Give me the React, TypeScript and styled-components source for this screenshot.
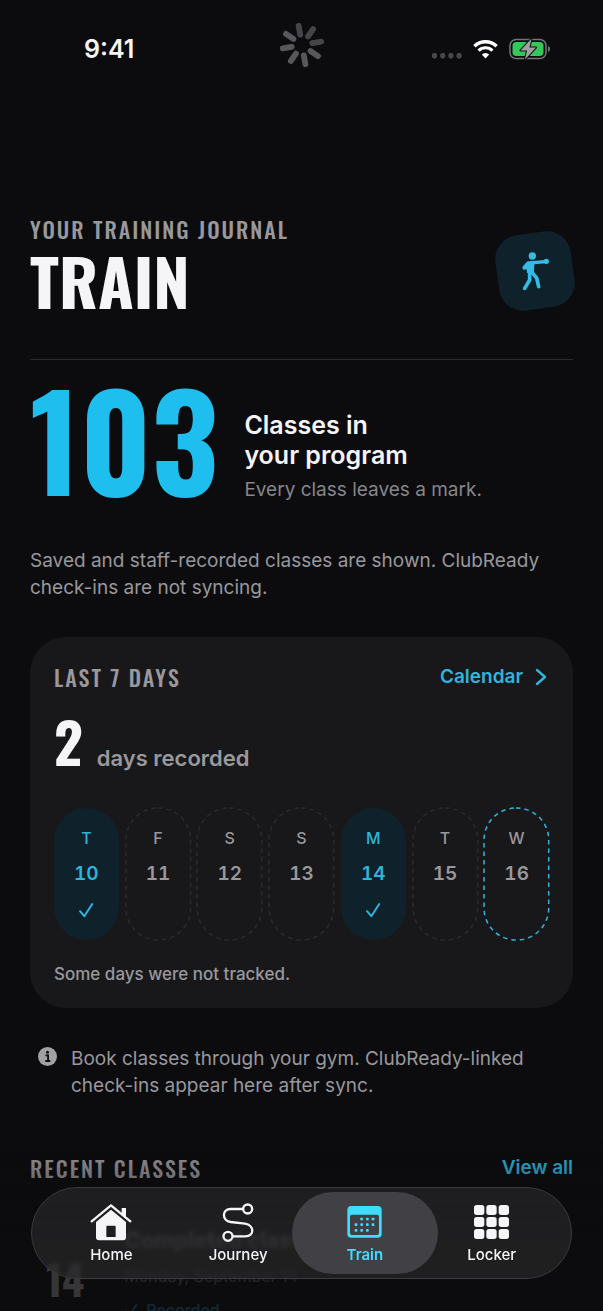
import React from "react";
import styled, { createGlobalStyle } from "styled-components";

const color = {
  bg: "#0c0c0e",
  card: "#18181a",
  text: "#f5f5f8",
  muted: "#98989d",
  dim: "#86868b",
  accent: "#1ebfef",
  link: "#2fb4dc",
  tint: "#0f212a",
};

const sans = `Inter, "Noto Sans", sans-serif`;
const display = `Oswald, "Liberation Sans Narrow", "Liberation Sans", sans-serif`;

const GlobalStyle = createGlobalStyle`
  *, *::before, *::after { box-sizing: border-box; }
  body { margin: 0; background: ${color.bg}; color: ${color.text}; font-family: ${sans}; }
  h1, h2, h3, p, ul, ol { margin: 0; padding: 0; }
  ul, ol { list-style: none; }
  button { font: inherit; border: 0; padding: 0; background: none; cursor: pointer; }
  a { text-decoration: none; }
  svg { display: block; }
`;

const Screen = styled.div`
  height: 100vh;
  overflow: hidden auto;
  scrollbar-width: none;
  background: ${color.bg};
`;

const StatusBar = styled.div`
  display: grid;
  grid-template-columns: 1fr auto 1fr;
  align-items: center;
  height: 98px;
  padding: 0 52px 0 84px;
`;

const Clock = styled.time`
  font-size: 25px;
  font-weight: 600;
  line-height: 30px;
`;

const SpinnerSlot = styled.div`
  margin: 0 32px 8px 0;
`;

const StatusIcons = styled.div`
  display: flex;
  justify-content: flex-end;
  align-items: center;
  gap: 11px;
`;

const Page = styled.main`
  padding: 117px 30px 140px;
`;

const Header = styled.header`
  display: flex;
  justify-content: space-between;
  align-items: center;
  padding-bottom: 32px;
  border-bottom: 1px solid #2a2a2d;
`;

const Label = styled.h2`
  font-family: ${display};
  font-size: 22px;
  font-weight: 500;
  line-height: 28px;
  letter-spacing: 2px;
  text-transform: uppercase;
  color: ${color.muted};
`;

const Title = styled.h1`
  margin-bottom: 10px;
  font-family: ${display};
  font-size: 65px;
  font-weight: 700;
  line-height: 74px;
  text-transform: uppercase;
`;

const Badge = styled.div`
  display: grid;
  place-items: center;
  width: 76px;
  height: 76px;
  border-radius: 24px;
  background: ${color.tint};
  transform: rotate(-8deg);

  svg {
    transform: rotate(8deg);
  }
`;

const Hero = styled.section`
  display: flex;
  align-items: flex-start;
  gap: 26px;
  padding-top: 28px;
`;

const HeroCount = styled.strong`
  font-family: ${display};
  font-size: 130px;
  font-weight: 700;
  line-height: 100px;
  color: ${color.accent};
`;

const HeroText = styled.div`
  padding-top: 22px;
`;

const HeroTitle = styled.p`
  font-size: 25px;
  font-weight: 600;
  line-height: 30px;
`;

const Body = styled.p`
  font-size: 19px;
  line-height: 27px;
  color: ${color.muted};
`;

const HeroNote = styled(Body)`
  margin-top: 6px;
  color: ${color.dim};
`;

const Notice = styled(Body)`
  margin-top: 44px;
`;

const Card = styled.section`
  margin-top: 36px;
  padding: 24px;
  border-radius: 36px;
  background: ${color.card};
`;

const SectionHead = styled.div`
  display: flex;
  justify-content: space-between;
  align-items: center;
`;

const TextLink = styled.a`
  display: flex;
  align-items: center;
  gap: 12px;
  font-size: 19px;
  font-weight: 600;
  line-height: 32px;
  color: ${color.link};
`;

const Summary = styled.p`
  display: flex;
  align-items: baseline;
  gap: 14px;
  margin-top: 18px;
  font-size: 22px;
  font-weight: 600;
  line-height: 28px;
  color: ${color.muted};
`;

const SummaryCount = styled.strong`
  font-family: ${display};
  font-size: 56px;
  line-height: 60px;
  color: ${color.text};
`;

const Week = styled.ol`
  display: grid;
  grid-template-columns: repeat(7, 1fr);
  gap: 7px;
  margin-top: 36px;
`;

const Day = styled.li<{ $done: boolean }>`
  position: relative;
  display: flex;
  flex-direction: column;
  align-items: center;
  height: 132px;
  padding: 12px 0;
  border-radius: 33px;
  line-height: 36px;
  background: ${(p) => (p.$done ? color.tint : "transparent")};
  color: ${(p) => (p.$done ? color.link : color.muted)};
`;

const DayOutline = styled.svg`
  position: absolute;
  inset: 0;
  width: 100%;
  height: 100%;
  overflow: visible;
`;

const DayName = styled.span`
  font-size: 16px;
  font-weight: 500;
`;

const DayNumber = styled.span`
  font-size: 19px;
  font-weight: 600;
  font-variant-numeric: tabular-nums;
`;

const DayMark = styled.span`
  display: grid;
  place-items: center;
  height: 36px;
`;

const Caption = styled.p`
  margin-top: 24px;
  font-size: 17px;
  font-weight: 500;
  line-height: 20px;
  color: ${color.muted};
`;

const Info = styled.div`
  display: flex;
  gap: 14px;
  margin-top: 37px;
  padding-left: 8px;

  svg {
    flex: none;
    margin-top: 2px;
  }
`;

const RecentHead = styled(SectionHead)`
  margin-top: 53px;
`;

const ClassRow = styled.article`
  display: flex;
  gap: 40px;
  margin-top: 34px;
  padding-left: 16px;
`;

const ClassDay = styled.strong`
  padding-top: 32px;
  font-family: ${display};
  font-size: 42px;
  line-height: 56px;
`;

const ClassTitle = styled.h3`
  font-size: 22px;
  font-weight: 700;
  line-height: 44px;
`;

const ClassMeta = styled.p`
  font-size: 16px;
  line-height: 28px;
  color: ${color.muted};
`;

const ClassState = styled.p`
  display: flex;
  align-items: center;
  gap: 8px;
  font-size: 16px;
  font-weight: 500;
  line-height: 40px;
  color: ${color.link};
`;

const BottomFade = styled.div`
  position: fixed;
  inset: auto 0 0;
  height: 170px;
  background: linear-gradient(rgba(12, 12, 14, 0), rgba(12, 12, 14, 0.82) 60%, rgba(12, 12, 14, 0.82));
  pointer-events: none;
`;

const TabBar = styled.nav`
  position: fixed;
  inset: auto 31px 32px;
  display: grid;
  grid-template-columns: repeat(4, 1fr);
  height: 92px;
  padding: 4px 16px;
  border: 1px solid #3a3a3d;
  border-radius: 46px;
  background: rgba(42, 42, 44, 0.64);
  backdrop-filter: blur(2px);
`;

const Tab = styled.button<{ $active: boolean }>`
  position: relative;
  display: flex;
  flex-direction: column;
  align-items: center;
  justify-content: center;
  gap: 3px;
  font-size: 15px;
  font-weight: ${(p) => (p.$active ? 600 : 500)};
  line-height: 20px;
  color: ${(p) => (p.$active ? "#3fdcff" : color.text)};

  &::before {
    content: "";
    position: absolute;
    inset: 0 -10px;
    z-index: -1;
    border-radius: 41px;
    background: ${(p) => (p.$active ? "#414145" : "transparent")};
  }
`;

const TabIcon = styled.span`
  display: grid;
  place-items: center;
  height: 40px;
`;

const Spinner = () => (
  <svg width="46" height="46" viewBox="-23 -23 46 46" aria-label="Loading">
    {[0, 45, 90, 135, 180, 225, 270, 315].map((a, i) => (
      <line
        key={a}
        y1="-10.5"
        y2="-19.5"
        stroke={i < 3 ? "#454549" : "#58585c"}
        strokeWidth="5.8"
        strokeLinecap="round"
        transform={`rotate(${a - 10})`}
      />
    ))}
  </svg>
);

const SignalDots = () => (
  <svg width="30" height="20" viewBox="0 0 30 20" fill="#48484b">
    {[0, 8.2, 16.4, 24.6].map((x) => (
      <rect key={x} x={x} y="14" width="5" height="5.4" rx="1.8" />
    ))}
  </svg>
);

const Wifi = () => (
  <svg width="25" height="20" viewBox="0 0 25 20" fill="none" stroke="#fff">
    <path d="M1.4 7.3a15.8 15.8 0 0 1 22.2 0" strokeWidth="3.4" />
    <path d="M5.6 11.6a9.8 9.8 0 0 1 13.8 0" strokeWidth="3.2" />
    <path d="M12.5 19.4l-3.7-3.8a5.3 5.3 0 0 1 7.4 0z" fill="#fff" stroke="none" />
  </svg>
);

const Battery = () => (
  <svg width="42" height="22" viewBox="0 0 42 22">
    <rect x="1" y="1.5" width="36" height="19" rx="6" fill="none" stroke="#747476" strokeWidth="1.5" />
    <path d="M39 8v6c1.4-.5 2-1.6 2-3s-.6-2.5-2-3z" fill="#747476" />
    <rect x="3.5" y="4" width="31" height="14" rx="3.8" fill="#34c759" />
    <path
      d="M22.5 .5L11.5 12.5h6.500L16 21.500 27 9.500h-6.500z"
      fill="#a0a0a2"
      stroke="#0c0c0e"
      strokeWidth="2"
      strokeLinejoin="round"
      paintOrder="stroke"
    />
  </svg>
);

const Boxer = () => (
  <svg width="28" height="40" viewBox="0 0 84 120" fill="#35bce6" stroke="#35bce6" strokeLinecap="round" strokeLinejoin="round">
    <circle cx="34" cy="15" r="11" stroke="none" />
    <path d="M24 36L74 32" fill="none" strokeWidth="10" />
    <circle cx="76" cy="31" r="8" stroke="none" />
    <path d="M21 36L9 50" fill="none" strokeWidth="10" />
    <path d="M21 36L38 35 36 66 20 64 20 52 8 53z" strokeWidth="5" />
    <path d="M26 62L26 87 11 112" fill="none" strokeWidth="11" />
    <path d="M31 62L47 81 53 107" fill="none" strokeWidth="11" />
  </svg>
);

const Chevron = () => (
  <svg width="14" height="18" viewBox="0 0 14 18" fill="none" stroke="currentColor" strokeWidth="2.4" strokeLinecap="round" strokeLinejoin="round">
    <path d="M2 2l8 7-8 7" />
  </svg>
);

const Check = ({ size = 16 }: { size?: number }) => (
  <svg width={size} height={size} viewBox="0 0 16 16" fill="none" stroke="currentColor" strokeWidth="2" strokeLinecap="round" strokeLinejoin="round">
    <path d="M2 9.200l4.300 5L14.200 2" />
  </svg>
);

const InfoIcon = () => (
  <svg width="19" height="19" viewBox="0 0 19 19">
    <circle cx="9.500" cy="9.500" r="9.500" fill="#a0a0a5" />
    <circle cx="9.500" cy="5.200" r="1.500" fill={color.bg} />
    <path d="M7.500 8.300h2.600v5.400M7.300 14h5" fill="none" stroke={color.bg} strokeWidth="1.800" />
  </svg>
);

const HomeIcon = () => (
  <svg width="42" height="38" viewBox="0 0 126 114" fill="currentColor">
    <path d="M95 15h13v32L95 36z" />
    <path d="M5 55L63 7l58 48" fill="none" stroke="currentColor" strokeWidth="7" strokeLinecap="round" strokeLinejoin="round" />
    <path fillRule="evenodd" d="M63 20L18 57v46a9 9 0 0 0 9 9h72a9 9 0 0 0 9-9V57zM49 71a3 3 0 0 1 3-3h22a3 3 0 0 1 3 3v31H49z" />
  </svg>
);

const JourneyIcon = () => (
  <svg width="34" height="40" viewBox="0 0 102 120" fill="none" stroke="currentColor" strokeWidth="7">
    <circle cx="80" cy="21" r="13.500" />
    <circle cx="21" cy="103" r="13.500" />
    <path d="M66 21H29C2 21 2 56 29 60L72 65C101 70 101 103 73 103H35" />
  </svg>
);

const TrainIcon = () => (
  <svg width="35" height="32" viewBox="0 0 105 96" fill="currentColor">
    <path
      fillRule="evenodd"
      d="M13 0h79a12 12 0 0 1 12 12v71a12 12 0 0 1-12 12H13A12 12 0 0 1 1 83V12A12 12 0 0 1 13 0zM15 26a6 6 0 0 0-6 6v49a6 6 0 0 0 6 6h75a6 6 0 0 0 6-6V32a6 6 0 0 0-6-6z"
    />
    {[
      [44, 39], [61, 39], [78, 39],
      [27, 56], [44, 56], [61, 56], [78, 56],
      [27, 73], [44, 73], [61, 73],
    ].map(([x, y]) => (
      <rect key={`${x}-${y}`} x={x - 4} y={y - 4} width="8" height="8" rx="2" />
    ))}
  </svg>
);

const LockerIcon = () => (
  <svg width="35" height="34" viewBox="0 0 105 102" fill="currentColor">
    {[0, 37, 74].map((x) =>
      [0, 36, 72].map((y) => <rect key={`${x}-${y}`} x={x} y={y} width="31" height="30" rx="8" />)
    )}
  </svg>
);

const days = [
  { name: "T", date: 10, done: true },
  { name: "F", date: 11 },
  { name: "S", date: 12 },
  { name: "S", date: 13 },
  { name: "M", date: 14, done: true },
  { name: "T", date: 15 },
  { name: "W", date: 16, today: true },
];

const tabs = [
  { name: "Home", Icon: HomeIcon },
  { name: "Journey", Icon: JourneyIcon },
  { name: "Train", Icon: TrainIcon, active: true },
  { name: "Locker", Icon: LockerIcon },
];

export default function App() {
  return (
    <>
      <GlobalStyle />
      <Screen>
        <StatusBar>
          <Clock>9:41</Clock>
          <SpinnerSlot>
            <Spinner />
          </SpinnerSlot>
          <StatusIcons>
            <SignalDots />
            <Wifi />
            <Battery />
          </StatusIcons>
        </StatusBar>

        <Page>
          <Header>
            <div>
              <Label as="p">Your training journal</Label>
              <Title>Train</Title>
            </div>
            <Badge>
              <Boxer />
            </Badge>
          </Header>

          <Hero>
            <HeroCount>103</HeroCount>
            <HeroText>
              <HeroTitle>
                Classes in
                <br />
                your program
              </HeroTitle>
              <HeroNote>Every class leaves a mark.</HeroNote>
            </HeroText>
          </Hero>

          <Notice>
            Saved and staff-recorded classes are shown. ClubReady check-ins are not syncing.
          </Notice>

          <Card>
            <SectionHead>
              <Label>Last 7 days</Label>
              <TextLink href="#calendar">
                Calendar
                <Chevron />
              </TextLink>
            </SectionHead>
            <Summary>
              <SummaryCount>2</SummaryCount>
              days recorded
            </Summary>
            <Week>
              {days.map((d) => (
                <Day key={d.date} $done={!!d.done}>
                  {!d.done && (
                    <DayOutline aria-hidden="true">
                      <rect
                        width="100%"
                        height="100%"
                        rx="32"
                        fill="none"
                        stroke={d.today ? color.link : "#2b2b2e"}
                        strokeWidth="1.5"
                        strokeDasharray="4.5 4"
                      />
                    </DayOutline>
                  )}
                  <DayName>{d.name}</DayName>
                  <DayNumber>{d.date}</DayNumber>
                  {d.done && (
                    <DayMark>
                      <Check />
                    </DayMark>
                  )}
                </Day>
              ))}
            </Week>
            <Caption>Some days were not tracked.</Caption>
          </Card>

          <Info>
            <InfoIcon />
            <Body>Book classes through your gym. ClubReady-linked check-ins appear here after sync.</Body>
          </Info>

          <RecentHead>
            <Label>Recent classes</Label>
            <TextLink href="#classes">View all</TextLink>
          </RecentHead>
          <ClassRow>
            <ClassDay>14</ClassDay>
            <div>
              <ClassTitle>Completed class</ClassTitle>
              <ClassMeta>Monday, September 14</ClassMeta>
              <ClassState>
                <Check size={14} />
                Recorded
              </ClassState>
            </div>
          </ClassRow>
        </Page>
      </Screen>

      <BottomFade />
      <TabBar>
        {tabs.map(({ name, Icon, active }) => (
          <Tab key={name} type="button" $active={!!active} aria-current={active ? "page" : undefined}>
            <TabIcon>
              <Icon />
            </TabIcon>
            {name}
          </Tab>
        ))}
      </TabBar>
    </>
  );
}
